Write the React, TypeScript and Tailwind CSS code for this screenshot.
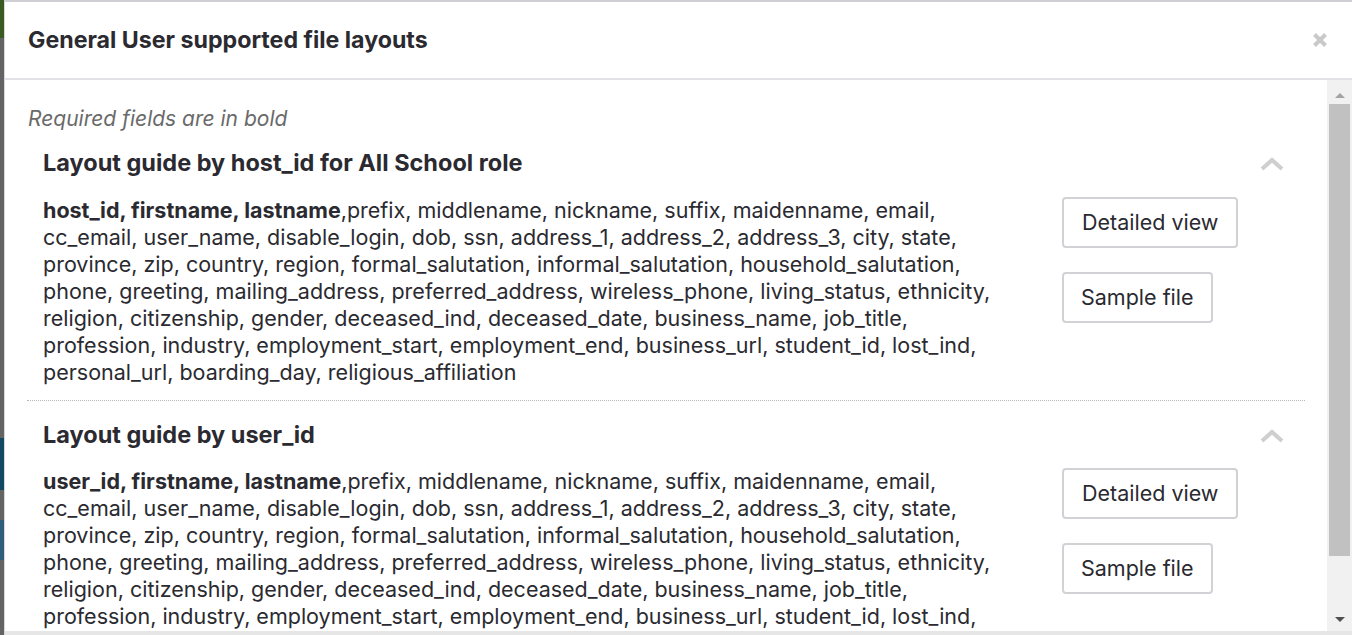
import React from "react";

const FONT = { fontFamily: "Inter, 'Open Sans', sans-serif" };

const restLines = [
  "cc_email, user_name, disable_login, dob, ssn, address_1, address_2, address_3, city, state,",
  "province, zip, country, region, formal_salutation, informal_salutation, household_salutation,",
  "phone, greeting, mailing_address, preferred_address, wireless_phone, living_status, ethnicity,",
  "religion, citizenship, gender, deceased_ind, deceased_date, business_name, job_title,",
  "profession, industry, employment_start, employment_end, business_url, student_id, lost_ind,",
  "personal_url, boarding_day, religious_affiliation",
];

function Chevron() {
  return (
    <svg width="24" height="14" viewBox="0 0 24 14" className="mt-[2px]">
      <polyline points="2,12 12,3 22,12" fill="none" stroke="#cfcfcf" strokeWidth="4" strokeLinejoin="miter" />
    </svg>
  );
}

function Section({ idField, title, first }: { idField: string; title: string; first?: boolean }) {
  return (
    <div className={`${first ? "pt-[16px] border-b border-dotted border-[#b8b8b8]" : "pt-[19px]"} pb-[14px] pl-4 pr-[21px]`}>
      <div className="flex items-center justify-between">
        <h3 className="text-[23.5px] leading-[30px] font-bold text-[#2a2a30]">{title}</h3>
        <Chevron />
      </div>
      <div className={`${first ? "mt-[19px]" : "mt-[18px]"} flex`}>
        <div className="flex-1 text-[21.5px] leading-[27px] text-[#2a2a30]">
          <div className="whitespace-nowrap">
            <b className="font-bold">{idField}, firstname, lastname</b>,prefix, middlename, nickname, suffix, maidenname, email,
          </div>
          {restLines.map((l) => (
            <div key={l} className="whitespace-nowrap">{l}</div>
          ))}
        </div>
        <div className="w-[222px] flex flex-col items-start gap-6">
          <button className="h-[51px] px-[18px] border-2 border-[#d2d2d6] rounded-[4px] bg-white text-[21.5px] text-[#2a2a30]">Detailed view</button>
          <button className="h-[51px] px-[17px] border-2 border-[#d2d2d6] rounded-[4px] bg-white text-[21.5px] text-[#2a2a30]">Sample file</button>
        </div>
      </div>
    </div>
  );
}

export default function App() {
  return (
    <div className="w-[1352px] h-[635px] overflow-hidden flex bg-[#636363]" style={FONT}>
      <div className="w-[4px] flex flex-col">
        <div className="h-[38px] bg-[#3b5a22]" />
        <div className="h-[400px] bg-[#646464]" />
        <div className="h-[52px] bg-[#0f4a62]" />
        <div className="h-[30px] bg-[#646464]" />
        <div className="h-[40px] bg-[#2f5f78]" />
        <div className="flex-1 bg-[#646464]" />
      </div>
      <div className="flex-1 flex flex-col bg-white border-l border-[#d8d8dc] border-t-2 border-t-[#cfcfd6] min-w-0">
        <div className="h-[78px] shrink-0 flex items-center justify-between pl-[23px] pr-[24px] border-b-2 border-[#e2e2e6]">
          <h2 className="text-[23.2px] font-bold text-[#2a2a30]">General User supported file layouts</h2>
          <svg width="16" height="16" viewBox="0 0 16 16">
            <path d="M2.5 2.5 L13.5 13.5 M13.5 2.5 L2.5 13.5" stroke="#c9c9c9" strokeWidth="4" strokeLinecap="butt" />
          </svg>
        </div>
        <div className="flex-1 flex min-h-0 border-b-[4px] border-[#e6e6e6]">
          <div className="flex-1 overflow-hidden px-[22px]">
            <p className="pt-[25px] pl-[1px] text-[21px] leading-[27px] italic text-[#6a6a6a]">Required fields are in bold</p>
            <Section idField="host_id" title="Layout guide by host_id for All School role" first />
            <Section idField="user_id" title="Layout guide by user_id" />
          </div>
          <div className="w-[25px] bg-[#f1f1f1] flex flex-col items-center">
            <div className="h-[24px] flex items-end justify-center pb-[6px]">
              <div className="w-0 h-0 border-l-[5px] border-r-[5px] border-b-[5px] border-l-transparent border-r-transparent border-b-[#a3a3a3]" />
            </div>
            <div className="w-[21px] h-[452px] bg-[#c1c1c1]" />
            <div className="flex-1 flex items-end justify-center pb-[9px]">
              <div className="w-0 h-0 border-l-[5px] border-r-[5px] border-t-[5px] border-l-transparent border-r-transparent border-t-[#505050]" />
            </div>
          </div>
        </div>
      </div>
    </div>
  );
}
